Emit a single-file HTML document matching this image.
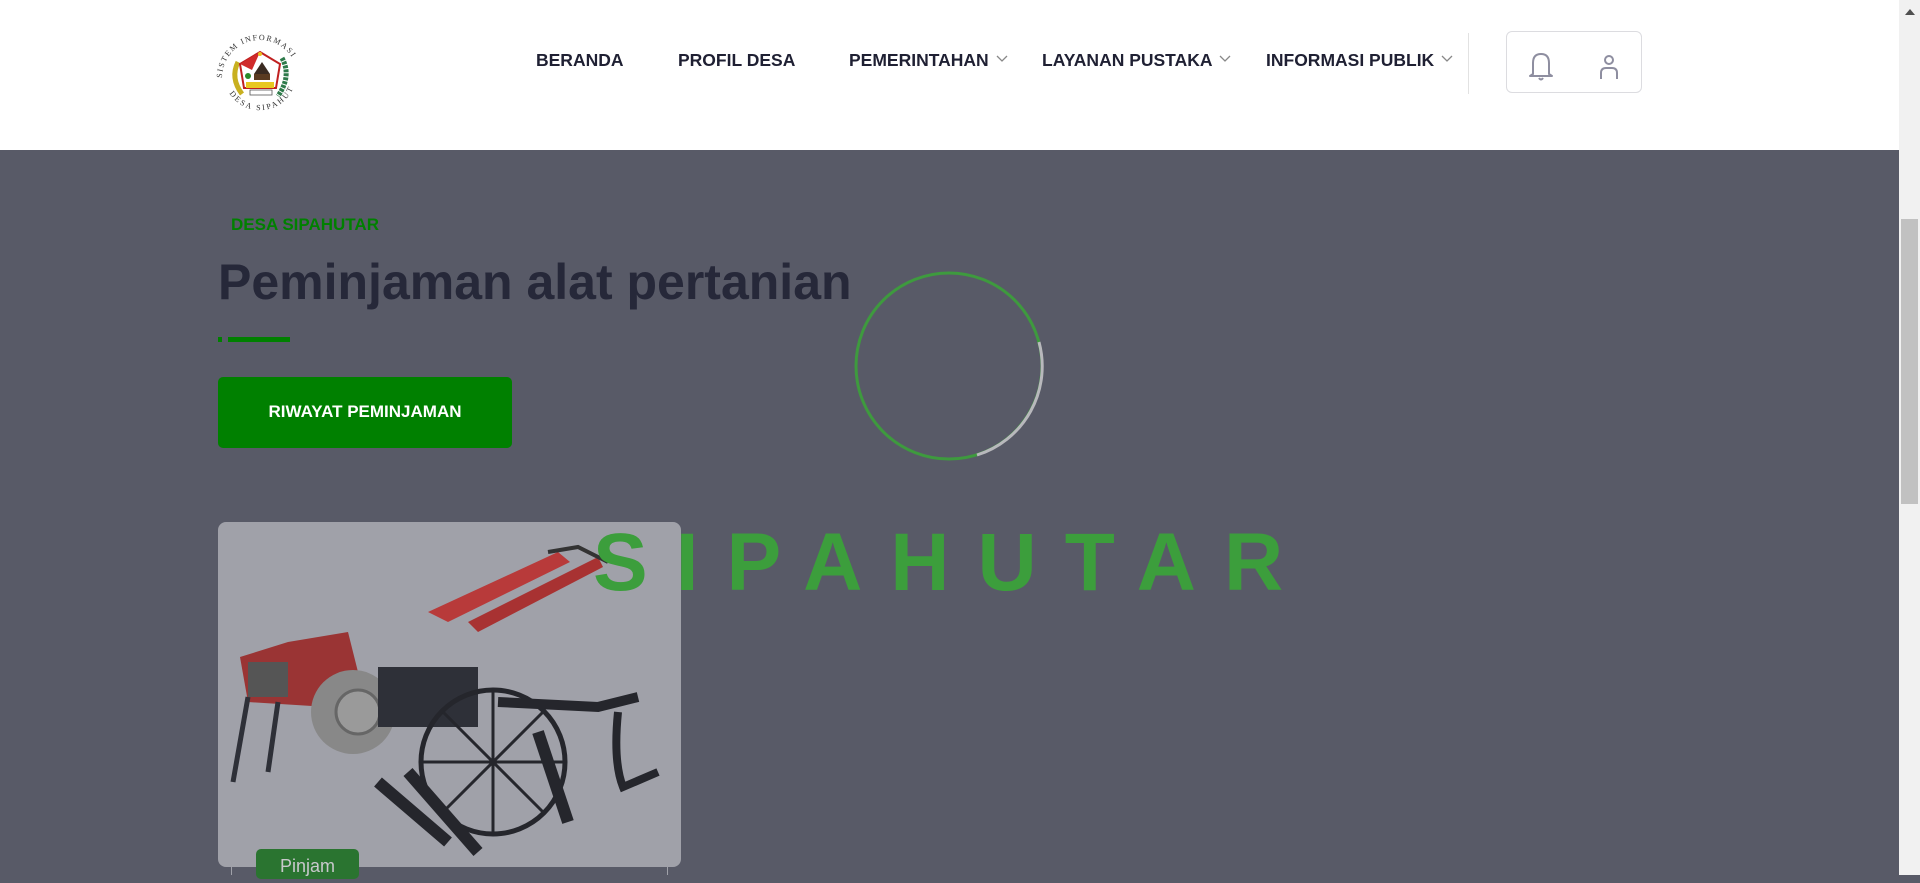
<!DOCTYPE html>
<html><head><meta charset="utf-8">
<style>
*{margin:0;padding:0;box-sizing:border-box}
html,body{width:1920px;height:875px;overflow:hidden;background:#585a67;font-family:"Liberation Sans",Arial,sans-serif}
.hdr{position:absolute;left:0;top:0;width:1899px;height:150px;background:#fff}
.nav{position:absolute;top:50px;font-weight:bold;font-size:17.5px;color:#1f2033;white-space:nowrap}
.chev{position:absolute;top:55px}
.sb{position:absolute;left:1899px;top:0;width:21px;height:875px;background:#f1f1f1}
.thumb{position:absolute;left:1901px;top:219px;width:17px;height:285px;background:#c1c1c1}
.abs{position:absolute}
</style></head><body>
<div class="hdr">
  <svg class="abs" style="left:212px;top:30px" width="96" height="90" viewBox="0 0 96 90">
    <defs><path id="arcT" d="M10,48 A38,38 0 0 1 86,48"/><path id="arcB" d="M14,56 A36,36 0 0 0 82,56"/></defs>
    <text font-size="8" fill="#333" letter-spacing="1.5" font-family="Liberation Serif,serif"><textPath href="#arcT">SISTEM INFORMASI</textPath></text>
    <text font-size="8" fill="#333" letter-spacing="2" font-family="Liberation Serif,serif"><textPath href="#arcB" startOffset="8">DESA SIPAHUTAR</textPath></text>
    <path d="M26,32 Q18,48 30,64" stroke="#c8b020" stroke-width="5" fill="none"/>
    <path d="M70,28 Q80,46 66,66" stroke="#2e7a4a" stroke-width="5" fill="none" stroke-dasharray="3 1"/>
    <path d="M48,22 L68,34 L64,58 L32,58 L28,34 Z" fill="#fff" stroke="#c02020" stroke-width="2"/>
    <path d="M28,34 L48,22 L40,40 Z" fill="#d02a2a"/>
    <path d="M50,32 L58,44 L42,44 Z" fill="#3a2a20"/>
    <rect x="42" y="44" width="16" height="6" fill="#5a3a20"/>
    <circle cx="36" cy="46" r="3" fill="#2a8a2a"/>
    <rect x="34" y="52" width="28" height="6" fill="#e8c820"/>
    <rect x="38" y="60" width="22" height="5" fill="#fff" stroke="#555" stroke-width="0.8"/>
    <circle cx="48" cy="24" r="2" fill="#e8c020"/>
  </svg>
  <div class="nav" style="left:536px">BERANDA</div>
  <div class="nav" style="left:678px">PROFIL DESA</div>
  <div class="nav" style="left:849px">PEMERINTAHAN</div>
  <div class="nav" style="left:1042px">LAYANAN PUSTAKA</div>
  <div class="nav" style="left:1266px">INFORMASI PUBLIK</div>
  <svg class="chev" style="left:996px" width="12" height="8"><path d="M1,1 L6,6 L11,1" stroke="#888" stroke-width="1.3" fill="none"/></svg>
  <svg class="chev" style="left:1219px" width="12" height="8"><path d="M1,1 L6,6 L11,1" stroke="#888" stroke-width="1.3" fill="none"/></svg>
  <svg class="chev" style="left:1441px" width="12" height="8"><path d="M1,1 L6,6 L11,1" stroke="#888" stroke-width="1.3" fill="none"/></svg>
  <div class="abs" style="left:1468px;top:33px;width:1px;height:61px;background:#e2e2e2"></div>
  <div class="abs" style="left:1506px;top:31px;width:136px;height:62px;border:1px solid #dcdce0;border-radius:6px"></div>
  <svg class="abs" style="left:1526px;top:50px" width="30" height="32" viewBox="0 0 30 32">
    <path d="M7,24 L7,13 Q7,4 15,4 Q23,4 23,13 L23,24 L26,26 L4,26 Z M13,28 Q15,31 17,28" stroke="#8e8ea0" stroke-width="2" fill="none" stroke-linejoin="round"/>
  </svg>
  <svg class="abs" style="left:1594px;top:52px" width="30" height="30" viewBox="0 0 30 30">
    <circle cx="15" cy="8" r="4" stroke="#8e8ea0" stroke-width="2" fill="none"/>
    <path d="M7,27 L7,21 Q7,16 12,16 L18,16 Q23,16 23,21 L23,27" stroke="#8e8ea0" stroke-width="2" fill="none"/>
  </svg>
</div>

<div class="abs" style="left:231px;top:215px;font-weight:bold;font-size:17px;color:#008000">DESA SIPAHUTAR</div>
<div class="abs" style="left:218px;top:253px;font-weight:bold;font-size:50px;color:#262839;white-space:nowrap">Peminjaman alat pertanian</div>
<div class="abs" style="left:218px;top:337px;width:4px;height:5px;background:#008000"></div>
<div class="abs" style="left:228px;top:337px;width:62px;height:5px;background:#008000"></div>
<div class="abs" style="left:218px;top:377px;width:294px;height:71px;background:#008000;border-radius:5px;color:#fff;font-weight:bold;font-size:17px;text-align:center;line-height:69px">RIWAYAT PEMINJAMAN</div>

<svg class="abs" style="left:853px;top:270px" width="192" height="192" viewBox="0 0 192 192">
  <circle cx="96" cy="96" r="93" stroke="#3e9a3e" stroke-width="3" fill="none"/>
  <path d="M186,72 A93,93 0 0 1 124,185" stroke="#b8b8bc" stroke-width="3" fill="none"/>
</svg>

<div class="abs" style="left:218px;top:522px;width:463px;height:345px;background:#a0a1a9;border-radius:8px;overflow:hidden">
  <svg width="463" height="345" viewBox="0 0 463 345">
    <path d="M210,90 L340,30 L352,40 L230,100 Z" fill="#b83a3a"/>
    <path d="M250,100 L380,35 L385,45 L260,110 Z" fill="#a83232"/>
    <path d="M330,30 L360,25 L390,40" stroke="#333" stroke-width="4" fill="none"/>
    <path d="M22,135 L70,120 L130,110 L140,150 L110,185 L30,180 Z" fill="#9a3434"/>
    <rect x="30" y="140" width="40" height="35" fill="#555"/>
    <circle cx="135" cy="190" r="42" fill="#888"/>
    <circle cx="140" cy="190" r="22" fill="#9a9a9a" stroke="#666" stroke-width="3"/>
    <rect x="160" y="145" width="100" height="60" fill="#2e3038"/>
    <circle cx="275" cy="240" r="72" stroke="#25262c" stroke-width="5" fill="none"/>
    <path d="M275,170 L275,310 M205,240 L345,240 M225,190 L325,290 M225,290 L325,190" stroke="#25262c" stroke-width="3"/>
    <path d="M160,260 L230,320 M190,250 L260,330 M320,210 L350,300" stroke="#25262c" stroke-width="12"/>
    <path d="M280,180 L380,185 L420,175" stroke="#25262c" stroke-width="10" fill="none"/>
    <path d="M400,190 Q395,240 405,265 L440,250" stroke="#25262c" stroke-width="8" fill="none"/>
    <path d="M30,175 L15,260 M60,180 L50,250" stroke="#2e3038" stroke-width="5"/>
  </svg>
</div>
<div class="abs" style="left:231px;top:867px;width:1px;height:8px;background:#a0a1a9"></div>
<div class="abs" style="left:667px;top:867px;width:1px;height:8px;background:#a0a1a9"></div>
<div class="abs" style="left:256px;top:849px;width:103px;height:30px;background:#2a7430;border-radius:5px;color:#c8c8cc;font-size:18px;text-align:center;line-height:34px">Pinjam</div>

<div class="abs" style="left:593px;top:513px;font-weight:bold;font-size:82px;letter-spacing:28px;color:#3c9e3c;white-space:nowrap;line-height:100px">SIPAHUTAR</div>

<div class="sb"></div>
<div class="thumb"></div>
<svg class="abs" style="left:1904px;top:8px" width="12" height="8"><path d="M1,7 L6,1 L11,7 Z" fill="#505050"/></svg>
</body></html>
